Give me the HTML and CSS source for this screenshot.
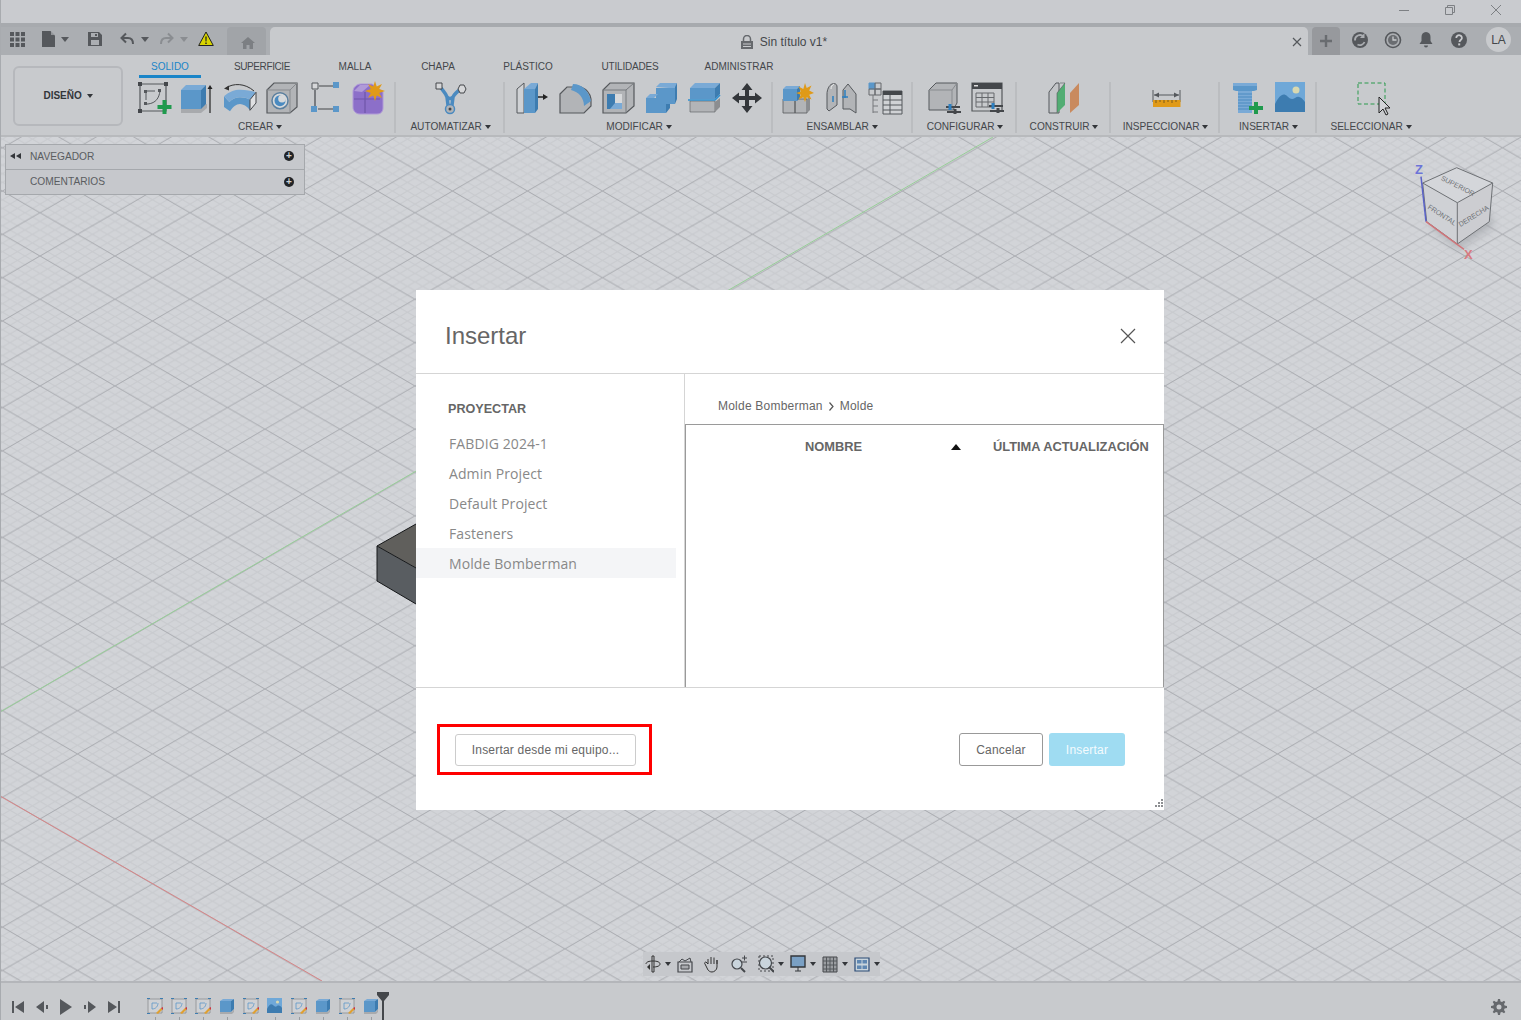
FILE: index.html
```html
<!DOCTYPE html>
<html lang="es">
<head>
<meta charset="utf-8">
<title>Sin título v1*</title>
<link rel="stylesheet" href="styles.css">
</head>
<body>
<div class="app">
  <header class="titlebar">
    <svg class="winbtn" width="12" height="12" viewBox="0 0 12 12"><path d="M1 6.500h10" stroke="#7d8084" fill="none"/></svg>
    <svg class="winbtn" width="12" height="12" viewBox="0 0 12 12"><path d="M1.500 3.500h7v7h-7zM3.500 3.500v-2h7v7h-2" stroke="#7d8084" fill="none"/></svg>
    <svg class="winbtn" width="12" height="12" viewBox="0 0 12 12"><path d="M1 1l10 10M11 1L1 11" stroke="#7d8084" fill="none"/></svg>
  </header>
  <nav class="tabbar">
    <div class="qat">
      <svg width="15" height="15" viewBox="0 0 15 15" class="q1"><path fill="#55585c" d="M0 0h4v4H0zM5.500 0h4v4h-4zM11 0h4v4h-4zM0 5.500h4v4H0zM5.500 5.500h4v4h-4zM11 5.500h4v4h-4zM0 11h4v4H0zM5.500 11h4v4h-4zM11 11h4v4h-4z"/></svg>
      <svg width="16" height="18" viewBox="0 0 16 18" class="q2"><path fill="#55585c" d="M1 1h8.500L14 5.500V17H1z"/><path fill="#abaeb2" d="M10 1v4h4z" opacity=".7"/></svg>
      <span class="caret q3"></span>
      <svg width="16" height="16" viewBox="0 0 16 16" class="q4"><path fill="#55585c" fill-rule="evenodd" d="M1 1h11l3 3v11H1zM4 2v4h7V2zM4 9v5h8V9z"/><path fill="#55585c" d="M8 3h2v2H8z"/></svg>
      <svg width="16" height="14" viewBox="0 0 16 14" class="q5"><path d="M7 1.500L2.500 6 7 10.500M3 6h6c3 0 5 2 5 6" fill="none" stroke="#55585c" stroke-width="2"/></svg>
      <span class="caret q6"></span>
      <svg width="16" height="14" viewBox="0 0 16 14" class="q7"><path d="M9 1.500L13.500 6 9 10.500M13 6H7c-3 0-5 2-5 6" fill="none" stroke="#8a8d91" stroke-width="2"/></svg>
      <span class="caret caret-dim q6"></span>
      <svg width="16" height="16" viewBox="0 0 16 16" class="q8"><path d="M8 1l7.300 13.500H.7z" fill="#d8d400" stroke="#222" stroke-width="1"/><path d="M7.300 5.500h1.400l-.2 5h-1zM7.300 11.400h1.400v1.500H7.300z" fill="#222"/></svg>
      <div class="hometab"><svg width="16" height="14" viewBox="0 0 16 14"><path fill="#7c7f83" d="M8 1l7 6h-2v6H9.500V9h-3v4H3V7H1z"/></svg></div>
    </div>
    <div class="doctab">
      <div class="doctitle">
        <svg width="12" height="14" viewBox="0 0 12 14"><path fill="#66696d" d="M0 6h12v8H0z"/><path d="M2.500 6V4a3.500 3.500 0 017 0v2" fill="none" stroke="#66696d" stroke-width="1.500"/><path d="M2 9h8M2 11.500h8" stroke="#c8cacd"/></svg>
        <span>Sin título v1*</span>
      </div>
      <svg class="tabclose" width="10" height="10" viewBox="0 0 10 10"><path d="M1 1l8 8M9 1L1 9" stroke="#55585c" stroke-width="1.200"/></svg>
    </div>
    <div class="plustab"><svg width="14" height="14" viewBox="0 0 14 14"><path d="M7 1v12M1 7h12" stroke="#696c70" stroke-width="2.400"/></svg></div>
    <div class="tools">
      <svg width="18" height="18" viewBox="0 0 18 18"><circle cx="9" cy="9" r="8" fill="#55585c"/><path d="M4 9.500a5 5 0 018.500-4M13.500 11a5 5 0 01-7 2.500" fill="none" stroke="#abaeb2" stroke-width="1.800"/><path d="M13.500 2v5H9z" fill="#abaeb2"/></svg>
      <svg width="18" height="18" viewBox="0 0 18 18"><circle cx="9" cy="9" r="7.500" fill="none" stroke="#55585c" stroke-width="1.600"/><circle cx="9" cy="9" r="5" fill="#6a6d71"/><path d="M9 5.500V9h3.500" fill="none" stroke="#c8cacd" stroke-width="1.300"/></svg>
      <svg width="18" height="18" viewBox="0 0 18 18"><path fill="#55585c" d="M9 1c3 0 4.500 2.200 4.500 5v4l2 3h-13l2-3V6C4.500 3.200 6 1 9 1zM7 14.500h4a2 2 0 01-4 0z"/></svg>
      <svg width="18" height="18" viewBox="0 0 18 18"><circle cx="9" cy="9" r="8" fill="#55585c"/><path d="M6.300 7a2.800 2.600 0 115 1.400c-.9.9-1.800 1.200-1.800 2.600" fill="none" stroke="#c8cacd" stroke-width="1.800"/><path d="M8.200 12.400h2v2h-2z" fill="#c8cacd"/></svg>
      <div class="avatar">LA</div>
    </div>
  </nav>

  <section class="ribbon">
    <button class="design">DISEÑO <span class="caret caret-sm caret-gap"></span></button>
    <div class="ribbon-main">
      <div class="rtabs">
        <span class="rtab rtab-active t1">SOLIDO</span>
        <span class="rtab t2">SUPERFICIE</span>
        <span class="rtab t3">MALLA</span>
        <span class="rtab t4">CHAPA</span>
        <span class="rtab t5">PLÁSTICO</span>
        <span class="rtab t6">UTILIDADES</span>
        <span class="rtab t7">ADMINISTRAR</span>
      </div>
      <div class="groups">
        <div class="group g-crear">
          <div class="icons">
            <svg class="ic" viewBox="0 0 32 32"><path d="M3 2h26v27H3z" fill="none" stroke="#55585c" stroke-width="1.200"/><path d="M1 0h4v4H1zM27 0h4v4h-4zM1 27h4v4H1z" fill="#44474b"/><path d="M9 9h14M9 9v12" stroke="#55585c" stroke-dasharray="9 3" fill="none"/><path d="M8 22h3c8-1 11-6 12-13" fill="none" stroke="#55585c"/><path d="M7 8h3v3H7zM21 7h3v3h-3zM7 20h3v3H7z" fill="#55585c"/><path d="M27.500 18v14M20.500 25h14" stroke="#1f9a4d" stroke-width="4"/></svg>
            <svg class="ic" viewBox="0 0 32 32"><path d="M1 27v4h20l6-5v-4z" fill="#a8aaad"/><path d="M1 8h20v19H1z" fill="#5b97c9"/><path d="M1 8l5-5h20l-5 5z" fill="#7aaad6"/><path d="M21 8l5-5v19l-5 5z" fill="#3d7cb0"/><path d="M30 31V5" stroke="#222" stroke-width="1.200"/><path d="M27.500 7l2.500-4 2.500 4z" fill="#222"/></svg>
            <svg class="ic" viewBox="0 0 32 32"><path d="M1 14.300L6.300 20C9 17 13 15.300 17 15.300c3 0 7 .7 10 2.400v10.600C24 24 20 22 17 22c-4 0-7 3-10 7.300L1 25z" fill="#5b97c9"/><path d="M1 14.300C6 9.500 12 7.700 17 7.700c6 0 11 .8 16 2.600l-6 7.400c-3-1.700-7-2.400-10-2.400-4 0-8 1.700-10.700 4.700z" fill="#7aaad6"/><path d="M27 17.700l6-7.400V21l-6 7.300z" fill="#dfe0e2" stroke="#44474b"/><path d="M3 6C10 1 22 1 31 9" fill="none" stroke="#333"/><path d="M1 6.500l5-3v5z" fill="#333"/></svg>
            <svg class="ic" viewBox="0 0 32 32"><path d="M1 8l7-7h23v24l-7 6H1z" fill="#b2b4b7" stroke="#55585c" stroke-width="1.200"/><path d="M1 8h23v23M24 8l7-7" fill="none" stroke="#888b8f"/><circle cx="14" cy="18.700" r="8" fill="#d7d9db" stroke="#5b7f9e" stroke-width="1.500"/><circle cx="14" cy="18.700" r="5.500" fill="#4a8ac0"/><circle cx="16" cy="16.700" r="3.800" fill="#d7d9db"/></svg>
            <svg class="ic" viewBox="0 0 28 32"><path d="M1 1h6v6H1z" fill="#d6d7d9" stroke="#55585c"/><path d="M22 0h6v6h-6zM0 24h6v6H0zM22 24h6v6h-6z" fill="#5b97c9"/><path d="M8 4h14M4 8v16M7 27h15" stroke="#44474b" stroke-width="1.200"/></svg>
            <svg class="ic" viewBox="0 0 32 32"><path d="M1 10c0-5 4-8 8-8h11l11 8v16c0 3-2 6-6 6H8c-4 0-7-3-7-7z" fill="#8c6fc9" stroke="#b09ad8"/><path d="M2 9l6-6h10l-8 7z" fill="#b09ad8"/><path d="M2 17h26M13 10v21" stroke="#6f55a9" stroke-width="1.200"/><path transform="translate(1 -2)" d="M22 1l1.700 5.500L29 4l-2.800 4.900L32 11l-5.800 2 2.800 5-5.300-2.500L22 21l-1.700-5.500L15 18l2.800-5L12 11l5.800-2.100L15 4l5.300 2.500z" fill="#e09a18"/></svg>
          </div>
          <div class="glabel">CREAR <span class="caret caret-sm"></span></div>
        </div>
        <div class="group g-auto">
          <div class="icons">
            <svg class="ic" viewBox="0 0 32 32"><path d="M6 6c3 4 4 4 6 9 2 2 4 2 6 0 2-4 5-6 8-8M12 15l1 8M18 15l-1 8" fill="none" stroke="#4a8ac0" stroke-width="3.500"/><path d="M1 1h6v6H1z" fill="#d6d7d9" stroke="#44474b"/><path d="M25 3h4l2 4-2 4h-4l-2-4z" fill="#d6d7d9" stroke="#44474b"/><circle cx="15" cy="27" r="4.500" fill="#b2b4b7" stroke="#4a8ac0" stroke-width="1.500"/><circle cx="15" cy="27" r="1.500" fill="#44474b"/></svg>
          </div>
          <div class="glabel">AUTOMATIZAR <span class="caret caret-sm"></span></div>
        </div>
        <div class="group g-mod">
          <div class="icons">
            <svg class="ic" viewBox="0 0 32 32"><path d="M1 7l7-6v30H1z" fill="#d0d2d5" stroke="#55585c"/><path d="M8 7h11v24H8z" fill="#5b97c9"/><path d="M8 7l7-6h7l-3 6z" fill="#7aaad6"/><path d="M19 7l3-6v26l-3 4z" fill="#3d7cb0"/><path d="M22 15h8" stroke="#222" stroke-width="1.500"/><path d="M27 12l5 3-5 3z" fill="#222"/></svg>
            <svg class="ic" viewBox="0 0 32 32"><path d="M1 12l7-7h14c5 2 9 5 10 12v7l-7 7H1z" fill="#b2b4b7" stroke="#55585c" stroke-width="1.200"/><path d="M14 2c9 0 16 7 18 17l-7 5c0-8-5-14-13-16z" fill="#5b97c9"/></svg>
            <svg class="ic" viewBox="0 0 32 32"><path d="M1 8l7-7h24v23l-8 7H1z" fill="#b2b4b7" stroke="#55585c" stroke-width="1.200"/><path d="M1 8h23v23M24 8l8-7" fill="none" stroke="#777a7e"/><path d="M5 12h15v15H5z" fill="#d7d9db"/><path d="M5 12h8v9h7v6H5z" fill="#3d7cb0"/><path d="M13 21l7 0v6H8z" fill="#7aaad6"/></svg>
            <svg class="ic" viewBox="0 0 32 32"><path d="M11 5l4-4h17l-2 5v15h-6V6z" fill="#7aaad6"/><path d="M11 6h19v16H11z" fill="#5b97c9"/><path d="M30 5l2-4v16l-2 5z" fill="#3d7cb0"/><path d="M1 16h20v15H1z" fill="#5b97c9"/><path d="M1 16l4-4h8l-4 4z" fill="#7aaad6"/><path d="M21 22v9l4-5v-4z" fill="#3d7cb0"/></svg>
            <svg class="ic" viewBox="0 0 32 32"><path d="M2 6l5-5h25l-5 5z" fill="#7aaad6"/><path d="M2 6h25v11H2z" fill="#5b97c9"/><path d="M27 6l5-5v11l-5 5z" fill="#3d7cb0"/><path d="M2 19h25v11H2z" fill="#b2b4b7" stroke="#55585c" stroke-width=".6"/><path d="M27 20l5-4v9l-5 5z" fill="#8b8d90"/><path d="M0 18h27l5-5" stroke="#2d8fd0" stroke-width="1.600" fill="none"/></svg>
            <svg class="ic" viewBox="0 0 32 32"><path d="M16 1l5.500 7H18v6h6v-3.500l7 5.500-7 5.500V18h-6v6h3.500L16 31l-5.500-7H14v-6H8v3.500L1 16l7-5.500V14h6V8h-3.500z" fill="#33363a"/></svg>
          </div>
          <div class="glabel">MODIFICAR <span class="caret caret-sm"></span></div>
        </div>
        <div class="group g-ens">
          <div class="icons">
            <svg class="ic" viewBox="0 0 32 32"><path d="M1 17h12v14H1zM13 17h12v14H13z" fill="#b2b4b7" stroke="#55585c" stroke-width=".8"/><path d="M25 17l3-3v14l-3 3z" fill="#8b8d90"/><path d="M1 7h14v12H1z" fill="#5b97c9"/><path d="M1 7l3-3h14l-3 3z" fill="#7aaad6"/><path d="M15 7l3-3v12l-3 3z" fill="#3d7cb0"/><path d="M23 1l1.700 5 4.800-2.400-2.300 4.900L32 11l-4.800 1.700 2.300 4.800-4.800-2.300L23 20l-1.700-4.800-4.800 2.300 2.300-4.800L14 11l4.800-1.500-2.300-4.900 4.800 2.400z" fill="#e09a18"/></svg>
            <svg class="ic" viewBox="0 0 32 32"><path d="M2 12c0-4 2-9 5-10 3-1 5 0 5 3v18l-8 6-2-2z" fill="#b2b4b7" stroke="#55585c"/><path d="M18 8l5-6 8 10v19l-6-4h-7z" fill="#b2b4b7" stroke="#55585c"/><path d="M9 2c-2 1-3 3-3 5" stroke="#eee" fill="none"/><path d="M8 14v6M20 8v8" stroke="#2d7fc0" stroke-width="1.500"/><path d="M17 15h6" stroke="#2d7fc0" stroke-width="1.500"/></svg>
            <svg class="ic ic-w" viewBox="0 0 34 32"><path d="M1 1h6v6H1z" fill="#5b97c9" stroke="#5b97c9"/><path d="M7 1h6v6H7zM1 7h6v6H1zM7 7h6v6H7z" fill="none" stroke="#66696d"/><path d="M5 13v18M5 18h5M5 24h5M5 30h5" stroke="#77797d"/><path d="M15 9h19v23H15z" fill="#d0d2d5" stroke="#55585c"/><path d="M15 9h19v4H15z" fill="#44474b"/><path d="M15 18h19M15 23h19M15 28h19M22 13v19" stroke="#55585c"/></svg>
          </div>
          <div class="glabel">ENSAMBLAR <span class="caret caret-sm"></span></div>
        </div>
        <div class="group g-conf">
          <div class="icons">
            <svg class="ic" viewBox="0 0 32 32"><path d="M1 8l7-7h21v20l-4 7H1z" fill="#b2b4b7" stroke="#55585c" stroke-width="1"/><path d="M1 8h23v20M24 8l5-7" fill="none" stroke="#888b8f"/><path d="M18 25h14M19 30h14" stroke="#44474b" stroke-width="2"/><path d="M22 22v6" stroke="#2d7fc0" stroke-width="3"/><path d="M27 27v5" stroke="#44474b" stroke-width="3"/></svg>
            <svg class="ic" viewBox="0 0 32 32"><path d="M1 1h30v28H1z" fill="#c8cacd" stroke="#55585c" stroke-width="1.200"/><path d="M1 1h30v6H1z" fill="#44474b"/><path d="M3 3h4v1.500H3z" fill="#ddd"/><path d="M5 11h18v14H5zM5 15.500h18M5 20h18M11 11v14M17 11v14" fill="none" stroke="#66696d"/><path d="M18 24h14M19 29h14" stroke="#44474b" stroke-width="2"/><path d="M22 21v6" stroke="#2d7fc0" stroke-width="3"/><path d="M27 26v5" stroke="#44474b" stroke-width="3"/></svg>
          </div>
          <div class="glabel">CONFIGURAR <span class="caret caret-sm"></span></div>
        </div>
        <div class="group g-cons">
          <div class="icons">
            <svg class="ic" viewBox="0 0 32 32"><path d="M1 10l7-9h3v30H1z" fill="#c3c5c8" stroke="#55585c"/><path d="M9 31V11l8-10v22z" fill="#52ad73"/><path d="M12 1h5L9 11V31" fill="none" stroke="#55585c" stroke-width=".6"/><path d="M22 11l9-10v22l-9 8z" fill="#c98a5e"/></svg>
          </div>
          <div class="glabel">CONSTRUIR <span class="caret caret-sm"></span></div>
        </div>
        <div class="group g-insp">
          <div class="icons">
            <svg class="ic" viewBox="0 0 32 32"><path d="M3 8v12M30 8v12M4 13h25" stroke="#55585c" fill="none" stroke-width="1"/><path d="M4 13l5-2.500v5zM29 13l-5-2.500v5z" fill="#55585c"/><path d="M3 18h27.500v7H3z" fill="#e09a18"/><path d="M6 18v3M10 18v2M14 18v3M18 18v2M22 18v3M26 18v2" stroke="#7a5a1a" fill="none"/></svg>
          </div>
          <div class="glabel">INSPECCIONAR <span class="caret caret-sm"></span></div>
        </div>
        <div class="group g-ins">
          <div class="icons">
            <svg class="ic" viewBox="0 0 32 32"><path d="M1 1h24v7l-3 1H4l-3-1z" fill="#5b97c9"/><path d="M1 1h24v3H1z" fill="#7aaad6"/><path d="M6 9h14v22H6z" fill="#7aaad6"/><path d="M6 12h14M6 15h14M6 18h14M6 21h14M6 24h14M6 27h14" stroke="#4a8ac0"/><path d="M24 20v12M17 26h14" stroke="#1f9a4d" stroke-width="4"/></svg>
            <svg class="ic ic-n" viewBox="0 0 30 30"><path d="M0 0h30v30H0z" fill="#6fa8d8"/><path d="M0 22c4-8 8-12 12-8 3 3 5 4 8 2 4-3 7 0 10 4v10H0z" fill="#3d7cb0"/><circle cx="21" cy="8" r="3.500" fill="#d8d8b0"/></svg>
          </div>
          <div class="glabel">INSERTAR <span class="caret caret-sm"></span></div>
        </div>
        <div class="group g-sel">
          <div class="icons">
            <svg class="ic" viewBox="0 0 32 32"><path d="M3 1h27v21H3z" fill="none" stroke="#2a9a4d" stroke-dasharray="4 2.500"/><path d="M24 15v16l4-4 3 6 2-1-3-6h5z" fill="#d2d4d8" stroke="#222" stroke-width="1"/></svg>
          </div>
          <div class="glabel">SELECCIONAR <span class="caret caret-sm"></span></div>
        </div>
      </div>
    </div>
  </section>

  <main class="canvas">
    <svg class="scene" width="1521" height="844" viewBox="0 0 1521 844">
      <defs>
        <pattern id="grid" width="75" height="43.300" patternUnits="userSpaceOnUse" patternTransform="translate(115 75.700)">
          <path d="M0 8.660L60 43.300M15 0L75 34.640M0 17.320L45 43.300M30 0L75 25.980M0 25.980L30 43.300M45 0L75 17.320M0 34.640L15 43.300M60 0L75 8.660M0 34.640L60 0M15 43.300L75 8.660M0 25.980L45 0M30 43.300L75 17.320M0 17.320L30 0M45 43.300L75 25.980M0 8.660L15 0M60 43.300L75 34.640" stroke="#c9cbcf" stroke-width="1.200" fill="none"/>
          <path d="M0 0L75 43.300M0 43.300L75 0" stroke="#a9abb0" stroke-width="1" fill="none"/>
        </pattern>
      </defs>
      <rect width="1521" height="844" fill="#d2d4d8"/>
      <rect width="1521" height="844" fill="url(#grid)"/>
      <path d="M0 575L993 0" stroke="#98cf98" fill="none"/>
      <path d="M0 659L322 844" stroke="#d88587" fill="none"/>
      <path d="M377 409L416 387V431z" fill="#605f5c"/>
      <path d="M377 409L416 431V467L377 444z" fill="#595d61"/>
      <path d="M377 409L416 387M377 409L416 431M377 409V444L416 467" stroke="#16181a" fill="none"/>
    </svg>

    <aside class="browser">
      <div class="brow"><span class="bback"><svg width="11" height="6" viewBox="0 0 11 6"><path d="M5 0v6L0 3zM11 0v6L6 3z" fill="#33363a"/></svg></span><span class="btext">NAVEGADOR</span><span class="bplus">+</span></div>
      <div class="brow"><span class="bback"></span><span class="btext">COMENTARIOS</span><span class="bplus">+</span></div>
    </aside>

    <svg class="cube" width="100" height="100" viewBox="0 0 100 100">
      <defs><filter id="blur" x="-30%" y="-30%" width="160%" height="160%"><feGaussianBlur stdDeviation="4"/></filter></defs>
      <path d="M30 66L58 90 94 66 90 52z" fill="#989ba0" opacity=".55" filter="url(#blur)"/>
      <path d="M22.700 23L56.700 7.700 92.700 23 57.300 42.700z" fill="#d4d6da"/>
      <path d="M22.700 23L57.300 42.700V84L26.700 61.700z" fill="#cfd1d5"/>
      <path d="M57.300 42.700L92.700 23 89.300 61.700 57.300 84z" fill="#cccdd1"/>
      <path d="M22.700 23L56.700 7.700 92.700 23 57.300 42.700zM22.700 23L26.700 61.700 57.300 84 89.300 61.700 92.700 23M57.300 42.700V84" fill="none" stroke="#6e7175"/>
      <text class="cubetxt" transform="translate(56.700 28) rotate(27)">SUPERIOR</text>
      <text class="cubetxt" transform="translate(40.700 57) rotate(33)">FRONTAL</text>
      <text class="cubetxt" transform="translate(75 58) rotate(-32)">DERECHA</text>
      <path d="M21 16.700L26 61.700" stroke="#5a62c8" stroke-width="1.500"/>
      <path d="M26 61.700L64 89.300" stroke="#d0757a" stroke-width="1.500"/>
      <text class="axisz" x="15" y="14">Z</text>
      <text class="axisx" x="64" y="99">X</text>
    </svg>

    <div class="navbar">
      <svg width="16" height="18" viewBox="0 0 16 18"><path d="M7 1h2v16H7zM1 9c0-2 3-3 7-3s7 1 7 3-3 3-7 3" fill="none" stroke="#333"/><path d="M5 9l-3 3 3 3z" fill="#333"/></svg>
      <span class="caret caret-sm"></span>
      <svg width="16" height="18" viewBox="0 0 16 18"><path d="M1 7h14v10H1z" fill="none" stroke="#44474b" stroke-width="1.200"/><path d="M4 10h8v4H4z" fill="#a8aaae" stroke="#44474b"/><path d="M2 7l3-3 3 2 5-3 1 4" fill="none" stroke="#44474b"/></svg>
      <svg width="16" height="18" viewBox="0 0 16 18"><path d="M4 9V4M7 9V2M10 9V2.500M13 9V5M4 9L2 7C1 7 0 8 1 9l3 6c1 1 2 2 4 2s5-2 5-5V5" fill="none" stroke="#333"/></svg>
      <svg width="16" height="18" viewBox="0 0 16 18"><circle cx="6" cy="9" r="5" fill="#c9d4dc" stroke="#44474b" stroke-width="1.200"/><path d="M10 13l4 4" stroke="#44474b" stroke-width="2"/><path d="M11 3h5M13.500 .5v5M11 7h5" stroke="#44474b"/></svg>
      <svg width="16" height="18" viewBox="0 0 16 18"><path d="M1 1h14v15H1z" fill="none" stroke="#44474b" stroke-dasharray="2 2"/><circle cx="7.500" cy="8" r="6" fill="#c9d4dc" stroke="#44474b" stroke-width="1.200"/><path d="M11 12l5 5" stroke="#44474b" stroke-width="2"/></svg>
      <span class="caret caret-sm"></span>
      <svg width="16" height="18" viewBox="0 0 16 18"><path d="M1 1h14v11H1z" fill="#7aa0c4" stroke="#33363a" stroke-width="1.400"/><path d="M5 16h6M8 12v4" stroke="#33363a"/></svg>
      <span class="caret caret-sm"></span>
      <svg width="16" height="18" viewBox="0 0 16 18"><path d="M1 2h14v15H1z" fill="#9a9da1" stroke="#44474b"/><path d="M4.500 2v15M8 2v15M11.500 2v15M1 6h14M1 10h14M1 14h14" stroke="#55585c"/></svg>
      <span class="caret caret-sm"></span>
      <svg width="16" height="18" viewBox="0 0 16 18"><path d="M1 3h14v13H1z" fill="#c9d4dc" stroke="#2b4a75" stroke-width="1.200"/><path d="M3 5h4.500v3.500H3zM8.500 5H13v3.500H8.500zM3 10.500h4.500V14H3zM8.500 10.500H13V14H8.500z" fill="#5f87b2"/></svg>
      <span class="caret caret-sm"></span>
    </div>

    <div class="modal">
      <div class="mhead">
        <h1>Insertar</h1>
        <svg class="mclose" width="16" height="16" viewBox="0 0 16 16"><path d="M1 1l14 14M15 1L1 15" stroke="#555" stroke-width="1.200"/></svg>
      </div>
      <div class="mbody">
        <div class="projects">
          <div class="phead">PROYECTAR</div>
          <div class="pitem">FABDIG 2024-1</div>
          <div class="pitem">Admin Project</div>
          <div class="pitem">Default Project</div>
          <div class="pitem">Fasteners</div>
          <div class="pitem pitem-sel">Molde Bomberman</div>
        </div>
        <div class="files">
          <div class="crumb">Molde Bomberman<svg class="crumb-sep" width="7" height="9" viewBox="0 0 7 9"><path d="M1.500 .5l3.500 4-3.500 4" fill="none" stroke="#555" stroke-width="1.200"/></svg>Molde</div>
          <div class="ftable">
            <div class="fhead">
              <span class="fname">NOMBRE</span>
              <span class="fsort"></span>
              <span class="fdate">ÚLTIMA ACTUALIZACIÓN</span>
            </div>
          </div>
        </div>
      </div>
      <div class="mfoot">
        <div class="redbox"><button class="btn btn-local">Insertar desde mi equipo...</button></div>
        <div class="factions">
          <button class="btn btn-cancel">Cancelar</button>
          <button class="btn btn-ok">Insertar</button>
        </div>
      </div>
      <svg class="grip" width="10" height="10" viewBox="0 0 10 10"><path fill="#8d8f92" d="M8 0h2v2H8zM5 3h2v2H5zM8 3h2v2H8zM2 6h2v2H2zM5 6h2v2H5zM8 6h2v2H8z"/></svg>
    </div>
  </main>

  <footer class="timeline">
    <div class="player">
      <svg width="14" height="14" viewBox="0 0 14 14"><path d="M1 1h2v12H1zM13 1v12L4 7z" fill="#55585c"/></svg>
      <svg width="14" height="14" viewBox="0 0 14 14"><path d="M9 1v12L1 7zM11 5h2v4h-2z" fill="#55585c"/></svg>
      <svg width="14" height="16" viewBox="0 0 14 16"><path d="M1 0l12 8-12 8z" fill="#55585c"/></svg>
      <svg width="14" height="14" viewBox="0 0 14 14"><path d="M5 1v12l8-6zM1 5h2v4H1z" fill="#55585c"/></svg>
      <svg width="14" height="14" viewBox="0 0 14 14"><path d="M1 1v12l9-6zM11 1h2v12h-2z" fill="#55585c"/></svg>
    </div>
    <div class="tlitems">
      <svg class="tl" viewBox="0 0 16 22"><use href="#tl-sk"/></svg>
      <svg class="tl" viewBox="0 0 16 22"><use href="#tl-sk"/></svg>
      <svg class="tl" viewBox="0 0 16 22"><use href="#tl-sk"/></svg>
      <svg class="tl" viewBox="0 0 16 22"><use href="#tl-ex"/></svg>
      <svg class="tl" viewBox="0 0 16 22"><use href="#tl-sk"/></svg>
      <svg class="tl" viewBox="0 0 16 22"><use href="#tl-im"/></svg>
      <svg class="tl" viewBox="0 0 16 22"><use href="#tl-sk"/></svg>
      <svg class="tl" viewBox="0 0 16 22"><use href="#tl-ex"/></svg>
      <svg class="tl" viewBox="0 0 16 22"><use href="#tl-sk"/></svg>
      <svg class="tl" viewBox="0 0 16 22"><use href="#tl-ex"/></svg>
    </div>
    <svg class="marker" width="12" height="28" viewBox="0 0 12 28"><path d="M0 0h12v3L7 9v19H5V9L0 3z" fill="#44474b"/></svg>
    <svg class="gear" width="16" height="16" viewBox="0 0 16 16"><path d="M7 0h2l.5 2.500 1.500.6L13 1.700 14.300 3 13 5l.6 1.500L16 7v2l-2.400.5L13 11l1.300 2L13 14.300 11 13l-1.500.6L9 16H7l-.5-2.400L5 13l-2 1.300L1.700 13 3 11l-.6-1.500L0 9V7l2.400-.5L3 5 1.700 3 3 1.700 5 3l1.500-.5zM8 5.500a2.500 2.500 0 100 5 2.500 2.500 0 000-5z" fill="#66696d" fill-rule="evenodd"/></svg>
  </footer>

  <svg class="defs" width="0" height="0">
    <defs>
      <g id="tl-sk"><path d="M1 1h14v14H1z" fill="#cfd1d4" stroke="#8a8d91" stroke-width=".8"/><path d="M0 0h3v1H0zM13 0h3v1h-3zM0 15h3v1H0z" fill="#3d7cb0"/><path d="M5 5h5M5 5v6M5 11c4 0 6-3 6-6" stroke="#5b97c9" fill="none" stroke-width=".8"/><path d="M9 15l5-5 2 1-5 5z" fill="#e0a030"/><path d="M14 10l2-1v3z" fill="#cc3344"/><path d="M8 19h1v3H8z" fill="#9a9da1"/></g>
      <g id="tl-ex"><path d="M1 14h12l2-3v3l-2 2H1z" fill="#a8aaad"/><path d="M1 3h11v11H1z" fill="#5b97c9"/><path d="M1 3l3-2h11l-3 2z" fill="#7aaad6"/><path d="M12 3l3-2v10l-3 3z" fill="#3d7cb0"/><path d="M8 19h1v3H8z" fill="#9a9da1"/></g>
      <g id="tl-im"><path d="M0 0h15v15H0z" fill="#6fa8d8"/><path d="M0 11c2-4 4-6 6-4 2 2 3 2 4 1 2-1 4 0 5 2v5H0z" fill="#3d7cb0"/><circle cx="10.500" cy="4" r="1.600" fill="#d8d8b0"/><path d="M8 19h1v3H8z" fill="#9a9da1"/></g>
    </defs>
  </svg>
</div>
</body>
</html>
```

FILE: styles.css
```css
* { box-sizing: border-box; }
html, body { margin: 0; height: 100%; overflow: hidden; }
body { font-family: "Liberation Sans", Arial, sans-serif; background: #c8cacd; color: #44474b; }
button { font-family: inherit; }
.app { width: 1521px; height: 1020px; display: flex; flex-direction: column; border-left: 1px solid #a8abaf; position: relative; }
.defs { position: absolute; }

.titlebar { height: 23px; flex: none; background: #c9cbcf; display: flex; justify-content: flex-end; align-items: center; gap: 34px; padding: 0 19px 3px 0; }

.tabbar { height: 32px; flex: none; background: #abaeb2; display: flex; border-top: 4px solid #a7aaae; }
.qat { width: 269px; display: flex; align-items: center; position: relative; padding: 0 0 4px 9px; }
.q1 { margin-right: 16px; }
.q2 { margin-right: 4px; }
.q3 { margin-right: 18px; }
.q4 { margin-right: 16px; }
.q5 { margin-right: 6px; }
.q6 { margin-right: 10px; }
.q7 { margin-right: 5px; }
.hometab { position: absolute; left: 226px; top: 0; bottom: 0; width: 39px; background: #a1a4a8; border-radius: 4px 4px 0 0; display: flex; align-items: center; justify-content: center; padding: 3px 0 0 2px; }
.doctab { width: 1038px; background: #c8cacd; border-radius: 5px 5px 0 0; display: flex; align-items: center; position: relative; justify-content: center; padding-right: 10px; }
.doctitle { display: flex; align-items: center; gap: 7px; font-size: 12px; color: #44474b; padding-top: 1px; }
.tabclose { position: absolute; right: 6px; top: 10px; }
.plustab { width: 28px; margin-left: 4px; background: #97999d; border-radius: 4px 4px 0 0; display: flex; align-items: center; justify-content: center; }
.tools { display: flex; align-items: center; gap: 15px; padding: 0 0 3px 11px; }
.avatar { width: 25px; height: 25px; border-radius: 50%; background: #c8cacd; font-size: 12px; color: #44474b; display: flex; align-items: center; justify-content: center; margin-left: 3px; }

.caret { display: inline-block; width: 0; height: 0; border-left: 4px solid transparent; border-right: 4px solid transparent; border-top: 5px solid #55585c; vertical-align: middle; }
.caret-dim { border-top-color: #8a8d91; }
.caret-sm { border-left-width: 3px; border-right-width: 3px; border-top-width: 4px; border-top-color: #33363a; }
.caret-gap { margin-left: 2px; }

.ribbon { height: 82px; flex: none; background: #c8cacd; display: flex; border-bottom: 2px solid #b8babd; position: relative; }
.design { width: 110px; height: 60px; margin: 11px 0 0 12px; background: #c8cacd; border: 2px solid #b6b8bc; border-radius: 6px; font-size: 10px; font-weight: bold; color: #33363a; flex: none; padding: 0 0 2px; }
.ribbon-main { margin-left: 5px; display: flex; flex-direction: column; }
.rtabs { height: 27px; display: flex; position: relative; padding-top: 6px; font-size: 10px; }
.rtab { color: #44474b; white-space: nowrap; height: 18px; line-height: 12px; text-align: center; flex: none; }
.rtab-active { color: #1a85c8; border-bottom: 3px solid #1a85c8; height: 17px; }
.t1 { width: 62px; margin-left: 11px; }
.t2 { width: 60px; margin-left: 31px; letter-spacing: -.4px; }
.t3 { width: 40px; margin-left: 43px; }
.t4 { width: 40px; margin-left: 43px; }
.t5 { width: 54px; margin-left: 43px; }
.t6 { width: 60px; margin-left: 45px; letter-spacing: -.2px; }
.t7 { width: 72px; margin-left: 43px; }

.groups { display: flex; height: 51px; }
.group { display: flex; flex-direction: column; align-items: center; border-right: 2px solid #bbbdc0; flex: none; height: 51px; padding-left: 2px; }
.icons { display: flex; gap: 11px; height: 33px; align-items: flex-start; }
.ic { width: 32px; height: 32px; flex: none; overflow: visible; }
.ic-w { width: 34px; }
.ic-n { width: 30px; height: 30px; }
.glabel { font-size: 10.100px; color: #44474b; margin-top: 5px; white-space: nowrap; line-height: 13px; }
.g-crear { width: 268px; padding: 0 2px 0 0; }
.g-auto { width: 109px; }
.g-mod { width: 268px; }
.g-ens { width: 140px; padding-left: 0; }
.g-conf { width: 104px; }
.g-cons { width: 94px; }
.g-insp { width: 109px; }
.g-ins { width: 97px; }
.g-sel { width: 108px; border-right: 0; padding-left: 0; }

.canvas { flex: 1; position: relative; overflow: hidden; background: #d2d4d8; }
.scene { position: absolute; left: -1px; top: 0; display: block; }
.browser { position: absolute; left: 4px; top: 7px; width: 300px; background: #c6c8cc; border: 1px solid #a5a8ac; }
.brow { height: 24px; display: flex; align-items: center; font-size: 10.200px; color: #5a5d61; padding-bottom: 2px; }
.brow + .brow { border-top: 1px solid #a5a8ac; height: 25px; padding-bottom: 1px; }
.bback { width: 24px; padding-left: 4px; display: flex; }
.btext { flex: 1; }
.bplus { width: 10px; height: 10px; border-radius: 50%; background: #222427; color: #d0d2d5; font-size: 10px; line-height: 9px; text-align: center; margin-right: 10px; font-weight: bold; }
.cube { position: absolute; left: 1399px; top: 23px; overflow: visible; }
.cubetxt { font-size: 7px; fill: #6e7175; font-family: "Liberation Sans", sans-serif; text-anchor: middle; }
.axisz { font-size: 13px; font-weight: bold; fill: #6c74d8; font-family: "Liberation Sans", sans-serif; }
.axisx { font-size: 13px; font-weight: bold; fill: #d87a80; font-family: "Liberation Sans", sans-serif; }
.navbar { position: absolute; left: 642px; top: 815px; width: 237px; height: 24px; padding-left: 2px; background: #c6c8cc; display: flex; align-items: center; }
.navbar svg { margin-left: 11px; flex: none; }
.navbar svg:first-child { margin-left: 0; }
.navbar .caret { margin-left: 4px; }
.navbar .caret + svg { margin-left: 6px; }

.modal { position: absolute; left: 415px; top: 153px; width: 748px; height: 520px; background: #fff; display: flex; flex-direction: column; }
.mhead { height: 84px; flex: none; border-bottom: 1px solid #d5d5d5; display: flex; align-items: center; justify-content: space-between; padding: 8px 28px 0 29px; }
.mhead h1 { margin: 0; font-size: 24px; font-weight: normal; color: #666; }
.mbody { height: 314px; flex: none; display: flex; border-bottom: 1px solid #d5d5d5; }
.projects { width: 269px; flex: none; border-right: 1px solid #d5d5d5; padding-top: 27px; font-family: "Open Sans", sans-serif; }
.phead { font-family: "Liberation Sans", sans-serif; font-weight: bold; font-size: 12.600px; color: #666; padding-left: 32px; height: 27px; line-height: 16px; }
.pitem { height: 30px; line-height: 31px; padding-left: 33px; font-size: 14px; color: #888; margin-right: 8px; letter-spacing: .1px; }
.pitem-sel { background: #f4f5f7; }
.files { flex: 1; display: flex; flex-direction: column; }
.crumb { height: 50px; padding: 25px 0 0 33px; font-size: 12px; line-height: 14px; color: #666; letter-spacing: .22px; }
.crumb-sep { margin: 0 5px; vertical-align: -1px; }
.ftable { flex: 1; border: 1px solid #9a9a9a; border-bottom: 0; }
.fhead { height: 43px; display: flex; align-items: center; font-size: 12.850px; font-weight: bold; color: #666; }
.fname { width: 119px; margin-left: 119px; white-space: nowrap; }
.fdate { white-space: nowrap; margin-left: 32px; }
.fsort { width: 0; height: 0; margin-left: 27px; border-left: 5px solid transparent; border-right: 5px solid transparent; border-bottom: 6px solid #111; }
.mfoot { flex: 1; display: flex; align-items: center; justify-content: space-between; padding: 0 39px 0 21px; position: relative; }
.redbox { width: 215px; height: 51px; border: 3px solid #f00; padding: 7px 0 0 15px; margin-top: 1px; }
.factions { display: flex; gap: 6px; margin-top: 1px; }
.btn { height: 33px; border-radius: 3px; font-size: 12px; color: #666; background: #fff; border: 1px solid #999; padding: 0; letter-spacing: .2px; }
.btn-local { width: 181px; height: 32px; border-color: #ccc; }
.btn-cancel { width: 84px; }
.btn-ok { width: 76px; border: 0; background: #9fdcf2; color: #f4fbfe; }
.grip { position: absolute; right: 1px; bottom: 1px; }
.mclose { flex: none; }

.timeline { height: 39px; flex: none; background: #c8cacd; border-top: 2px solid #b4b6ba; position: relative; display: flex; align-items: flex-start; padding: 15px 0 0 10px; }
.player { display: flex; align-items: center; gap: 10px; width: 136px; flex: none; height: 18px; }
.tlitems { display: flex; gap: 8px; }
.tl { width: 16px; height: 22px; flex: none; }
.marker { position: absolute; left: 376px; top: 9px; }
.gear { position: absolute; left: 1490px; top: 16px; }
```
